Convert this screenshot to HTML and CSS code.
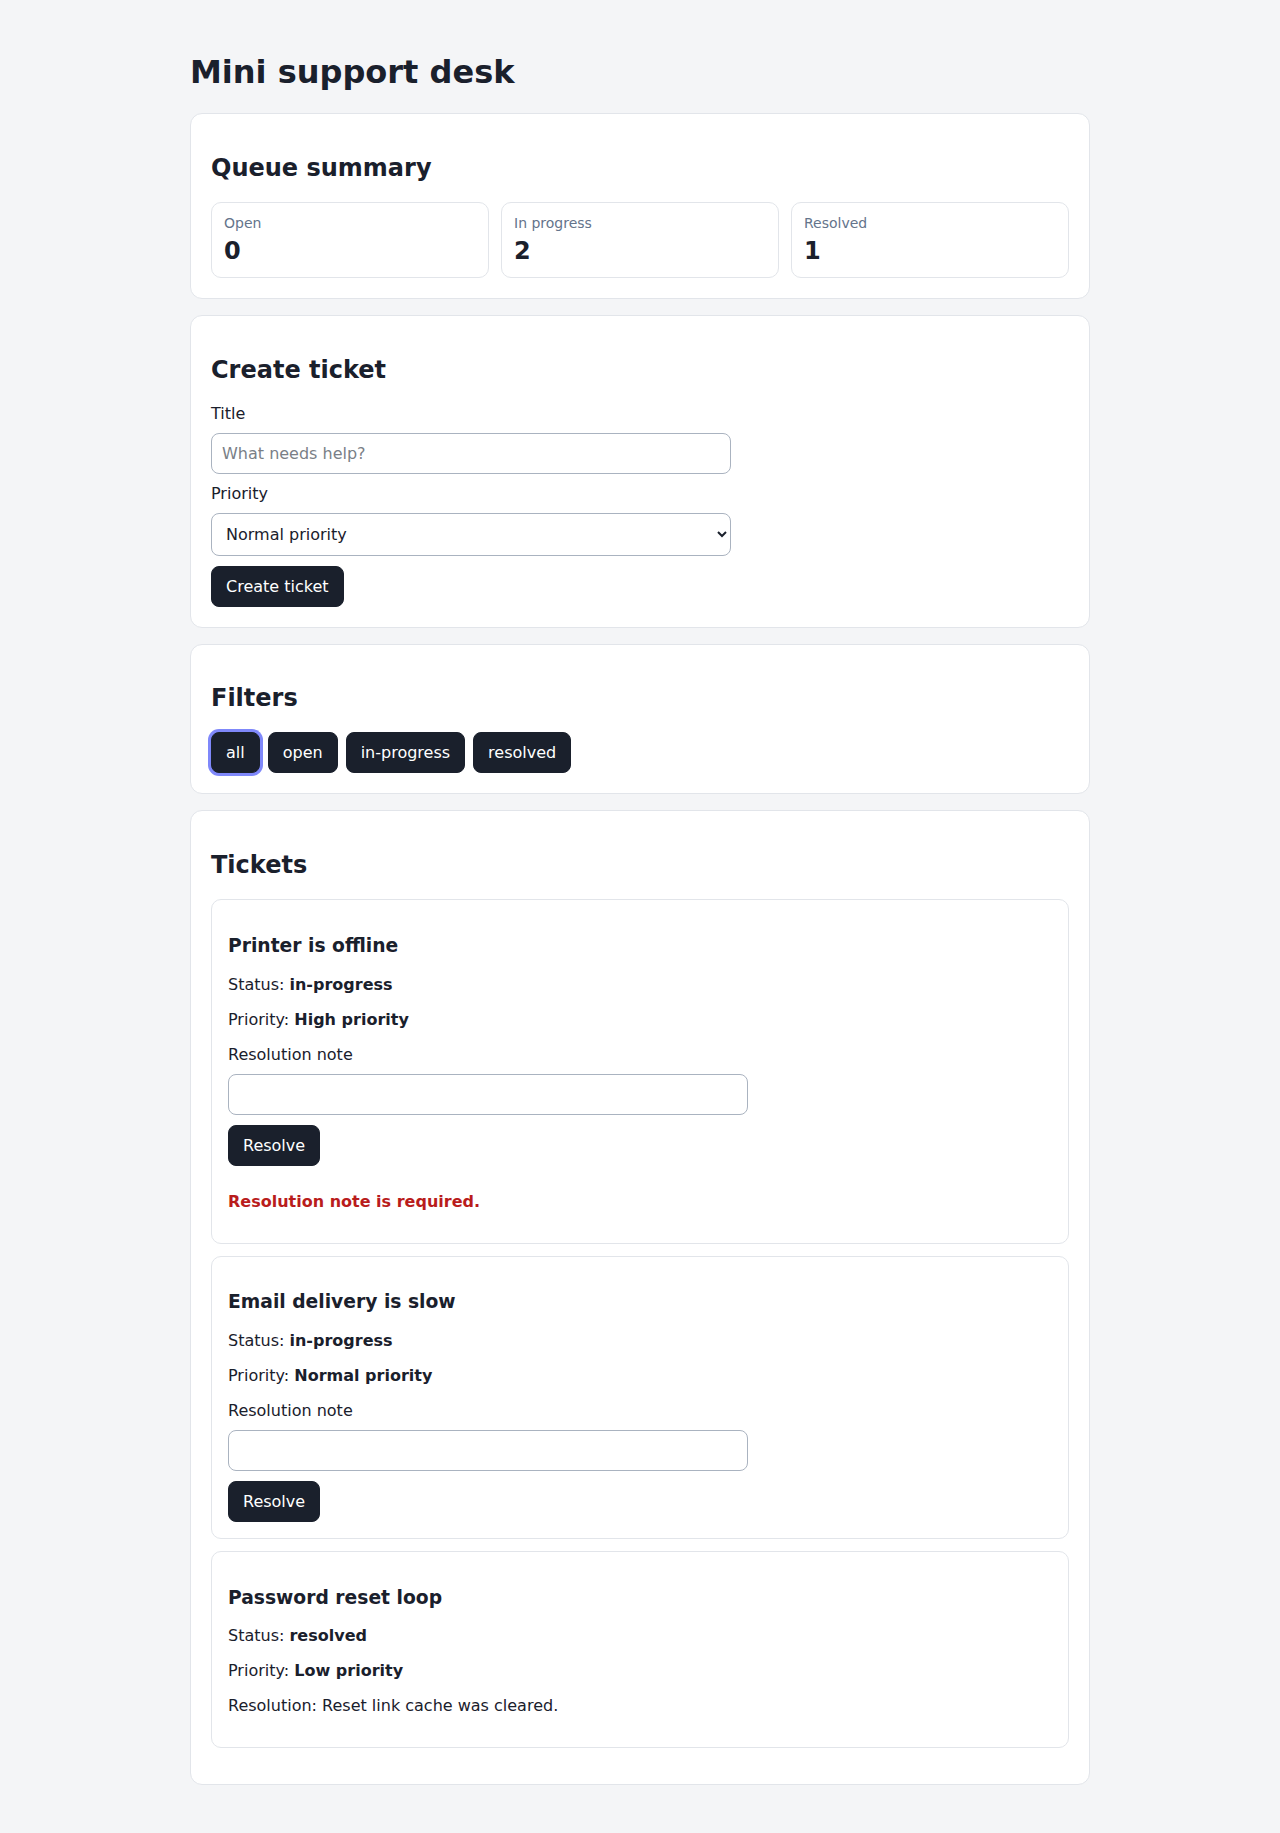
FILE: index.html
```html
<!DOCTYPE html>
<html lang="en">
<head>
<meta charset="utf-8">
<title>Mini support desk</title>
<link rel="stylesheet" href="styles.css">
</head>
<body>
<main class="app">
  <h1>Mini support desk</h1>

  <section class="card">
    <h2>Queue summary</h2>
    <div class="stats">
      <div class="stat"><span class="stat-label">Open</span><strong class="stat-value">0</strong></div>
      <div class="stat"><span class="stat-label">In progress</span><strong class="stat-value">2</strong></div>
      <div class="stat"><span class="stat-label">Resolved</span><strong class="stat-value">1</strong></div>
    </div>
  </section>

  <section class="card">
    <h2>Create ticket</h2>
    <form class="form">
      <label for="title">Title</label>
      <input id="title" class="field" type="text" placeholder="What needs help?">
      <label for="priority">Priority</label>
      <select id="priority" class="field">
        <option>Normal priority</option>
        <option>High priority</option>
        <option>Low priority</option>
      </select>
      <button type="button" class="btn">Create ticket</button>
    </form>
  </section>

  <section class="card">
    <h2>Filters</h2>
    <div class="filters">
      <button type="button" class="btn active">all</button>
      <button type="button" class="btn">open</button>
      <button type="button" class="btn">in-progress</button>
      <button type="button" class="btn">resolved</button>
    </div>
  </section>

  <section class="card">
    <h2>Tickets</h2>
    <div class="ticket-list">
      <article class="ticket">
        <h3>Printer is offline</h3>
        <p>Status: <strong>in-progress</strong></p>
        <p>Priority: <strong>High priority</strong></p>
        <form class="form">
          <label for="note1">Resolution note</label>
          <input id="note1" class="field" type="text">
          <button type="button" class="btn">Resolve</button>
          <p class="error">Resolution note is required.</p>
        </form>
      </article>

      <article class="ticket">
        <h3>Email delivery is slow</h3>
        <p>Status: <strong>in-progress</strong></p>
        <p>Priority: <strong>Normal priority</strong></p>
        <form class="form">
          <label for="note2">Resolution note</label>
          <input id="note2" class="field" type="text">
          <button type="button" class="btn">Resolve</button>
        </form>
      </article>

      <article class="ticket">
        <h3>Password reset loop</h3>
        <p>Status: <strong>resolved</strong></p>
        <p>Priority: <strong>Low priority</strong></p>
        <p>Resolution: Reset link cache was cleared.</p>
      </article>
    </div>
  </section>
</main>
</body>
</html>
```

FILE: styles.css
```css
* {
  box-sizing: border-box;
}

body {
  margin: 0;
  padding: 32px 16px;
  background: #f4f5f7;
  color: #1a202c;
  font-family: "DejaVu Sans", sans-serif;
  font-size: 16px;
}

.app {
  max-width: 900px;
  margin: 0 auto;
}

h1 {
  font-size: 32px;
  margin: 0.67em 0;
}

h2 {
  font-size: 24px;
  margin: 0.83em 0;
}

h3 {
  font-size: 1.17em;
  margin: 1em 0;
}

p {
  margin: 16px 0;
}

.card {
  background: #ffffff;
  border: 1px solid #e2e5ea;
  border-radius: 12px;
  padding: 20px;
  margin-bottom: 16px;
}

.stats {
  display: grid;
  grid-template-columns: repeat(3, 1fr);
  gap: 12px;
}

.stat {
  display: flex;
  flex-direction: column;
  gap: 6px;
  border: 1px solid #e2e5ea;
  border-radius: 10px;
  padding: 12px;
}

.stat-label {
  font-size: 14px;
  color: #64748b;
}

.stat-value {
  font-size: 24px;
  font-weight: bold;
}

.form {
  display: grid;
  gap: 10px;
  justify-items: start;
}

.form label {
  display: block;
}

.field {
  width: 100%;
  max-width: 520px;
  font-family: inherit;
  font-size: 16px;
  color: #1a202c;
  padding: 10px;
  border: 1px solid #aab3c0;
  border-radius: 8px;
  background: #ffffff;
}

.field::placeholder {
  color: #7a7f87;
}

.btn {
  font-family: inherit;
  font-size: 16px;
  color: #ffffff;
  background: #1a202c;
  border: 1px solid #1a202c;
  border-radius: 8px;
  padding: 10px 14px;
  cursor: pointer;
}

.filters {
  display: flex;
  gap: 8px;
}

.btn.active {
  box-shadow: 0 0 0 3px #7f88fa;
}

.ticket-list {
  display: flex;
  flex-direction: column;
  gap: 12px;
  margin-bottom: 16px;
}

.ticket {
  border: 1px solid #e2e5ea;
  border-radius: 10px;
  padding: 16px;
}

.error {
  color: #b91c1c;
  font-weight: bold;
}
```
